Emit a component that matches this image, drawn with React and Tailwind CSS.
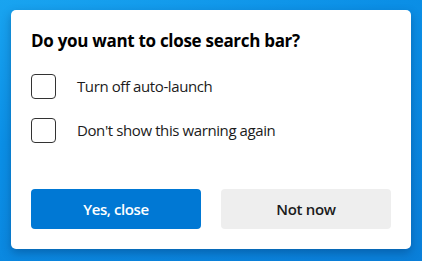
import React from 'react'

function Checkbox({ label }) {
  return (
    <label className="flex items-center h-[24px] cursor-pointer">
      <span className="w-[25px] h-[25px] border-[1.5px] border-[#333333] rounded-[4px] bg-white shrink-0"></span>
      <span className="ml-[21px] text-[15px] text-[#1b1b1b] leading-none tracking-[-0.4px]">{label}</span>
    </label>
  )
}

export default function App() {
  return (
    <div
      className="w-[422px] h-[261px] overflow-hidden bg-[linear-gradient(160deg,#19a4f0_0%,#0b8fe6_35%,#0a7fd9_100%)] pt-[10px] pl-[11px]"
      style={{ fontFamily: '"Segoe UI", "Open Sans", "Noto Sans", sans-serif' }}
    >
      <div className="w-[400px] h-[239px] bg-white rounded-[5px] shadow-[0_4px_10px_rgba(0,40,90,0.35)] px-[20px] pt-[19px] pb-[20px] flex flex-col">
        <h3 className="text-[17px] font-bold text-black leading-[24px] tracking-[-0.3px]">Do you want to close search bar?</h3>
        <div className="mt-[21px] flex flex-col gap-[20px]">
          <Checkbox label="Turn off auto-launch" />
          <Checkbox label="Don't show this warning again" />
        </div>
        <div className="mt-auto flex gap-[20px]">
          <button className="w-[170px] h-[40px] rounded-[4px] bg-[#0078d4] text-white text-[15px] font-semibold tracking-[-0.4px]">
            Yes, close
          </button>
          <button className="w-[170px] h-[40px] rounded-[4px] bg-[#eeeeee] text-[#1b1b1b] text-[15px] font-semibold tracking-[-0.3px]">
            Not now
          </button>
        </div>
      </div>
    </div>
  )
}
